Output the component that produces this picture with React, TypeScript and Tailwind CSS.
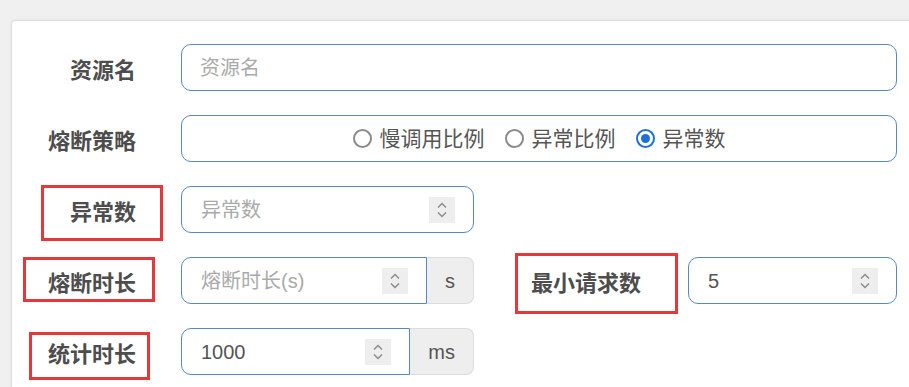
import { ReactNode } from "react";

const FONT = "font-['Liberation_Sans','Noto_Sans_CJK_SC',sans-serif]";

const Spinner = () => (
  <span className="flex h-[26px] w-[26px] shrink-0 items-center justify-center bg-[#eeeeee]">
    <svg width="12" height="20" viewBox="0 0 12 20" fill="none" stroke="#8a8a8a" strokeWidth="1.4">
      <path d="M2 7.5 6 3.5l4 4" />
      <path d="M2 12.5l4 4 4-4" />
    </svg>
  </span>
);

const NumberInput = ({
  value,
  placeholder,
  unit,
  width,
}: {
  value?: string;
  placeholder?: string;
  unit?: string;
  width: string;
}) => (
  <div className={`flex h-[47px] ${width}`}>
    <div
      className={`flex flex-1 items-center border-[1.5px] border-[#5489c8] bg-white pl-[19px] pr-[18px] ${
        unit ? "rounded-l-[10px]" : "rounded-[10px]"
      }`}
    >
      <span className={`flex-1 text-[20px] ${value ? "text-[#555]" : "text-[#aaa]"}`}>
        {value ?? placeholder}
      </span>
      <Spinner />
    </div>
    {unit && (
      <div className="flex items-center justify-center rounded-r-[8px] border border-l-0 border-[#dcdcdc] bg-[#eeeeee] px-[18px] text-[20px] text-[#555]">
        {unit}
      </div>
    )}
  </div>
);

const Label = ({ text, children }: { text: string; children?: ReactNode }) => (
  <div className="relative flex h-[47px] w-[124px] shrink-0 items-center justify-end pt-[5px] text-[22px] font-bold text-[#4d4d4d]">
    {text}
    {children}
  </div>
);

const Radio = ({ checked, text }: { checked?: boolean; text: string }) => (
  <label className="flex items-center gap-[8px]">
    {checked ? (
      <span className="flex h-[19px] w-[19px] items-center justify-center rounded-full border-[2px] border-[#1f6fd6]">
        <span className="h-[9px] w-[9px] rounded-full bg-[#1f6fd6]" />
      </span>
    ) : (
      <span className="h-[19px] w-[19px] rounded-full border-[2px] border-[#8a8a8a]" />
    )}
    <span className="text-[21px] text-[#555]">{text}</span>
  </label>
);

export default function App() {
  return (
    <div className={`h-[387px] w-[909px] overflow-hidden bg-[#f0f0f0] pt-[20px] pl-[11px] ${FONT}`}>
      <div className="flex h-[400px] w-[920px] flex-col gap-[24px] rounded-tl-[4px] border border-[#dcdcdc] bg-white pt-[23px] shadow-[0_0_3px_rgba(0,0,0,0.06)]">
        <div className="flex items-center">
          <Label text="资源名" />
          <div className="ml-[45px] flex h-[47px] w-[716px] items-center rounded-[10px] border-[1.5px] border-[#5489c8] pl-[18px] text-[20px] text-[#aaa]">
            资源名
          </div>
        </div>

        <div className="flex items-center">
          <Label text="熔断策略" />
          <div className="ml-[45px] flex h-[47px] w-[716px] items-center justify-center gap-[20px] rounded-[10px] border-[1.5px] border-[#5489c8]">
            <Radio text="慢调用比例" />
            <Radio text="异常比例" />
            <Radio checked text="异常数" />
          </div>
        </div>

        <div className="flex items-center">
          <Label text="异常数">
            <span className="absolute left-[29px] top-[-1px] h-[56px] w-[122px] border-[3px] border-[#e5383b]" />
          </Label>
          <div className="ml-[45px]">
            <NumberInput placeholder="异常数" width="w-[293px]" />
          </div>
        </div>

        <div className="flex items-center">
          <Label text="熔断时长">
            <span className="absolute left-[11px] top-[0px] h-[45px] w-[132px] border-[3px] border-[#e5383b]" />
          </Label>
          <div className="ml-[45px]">
            <NumberInput placeholder="熔断时长(s)" unit="s" width="w-[293px]" />
          </div>
          <div className="relative ml-[41px] flex h-[47px] w-[163px] items-center pl-[16px] pt-[6px] text-[22px] font-bold text-[#4d4d4d]">
            最小请求数
            <span className="absolute left-0 top-[-4px] h-[61px] w-[163px] border-[3px] border-[#e5383b]" />
          </div>
          <div className="ml-[10px]">
            <NumberInput value="5" width="w-[209px]" />
          </div>
        </div>

        <div className="flex items-center">
          <Label text="统计时长">
            <span className="absolute left-[17px] top-[4px] h-[48px] w-[121px] border-[3px] border-[#e5383b]" />
          </Label>
          <div className="ml-[45px]">
            <NumberInput value="1000" unit="ms" width="w-[293px]" />
          </div>
        </div>
      </div>
    </div>
  );
}
